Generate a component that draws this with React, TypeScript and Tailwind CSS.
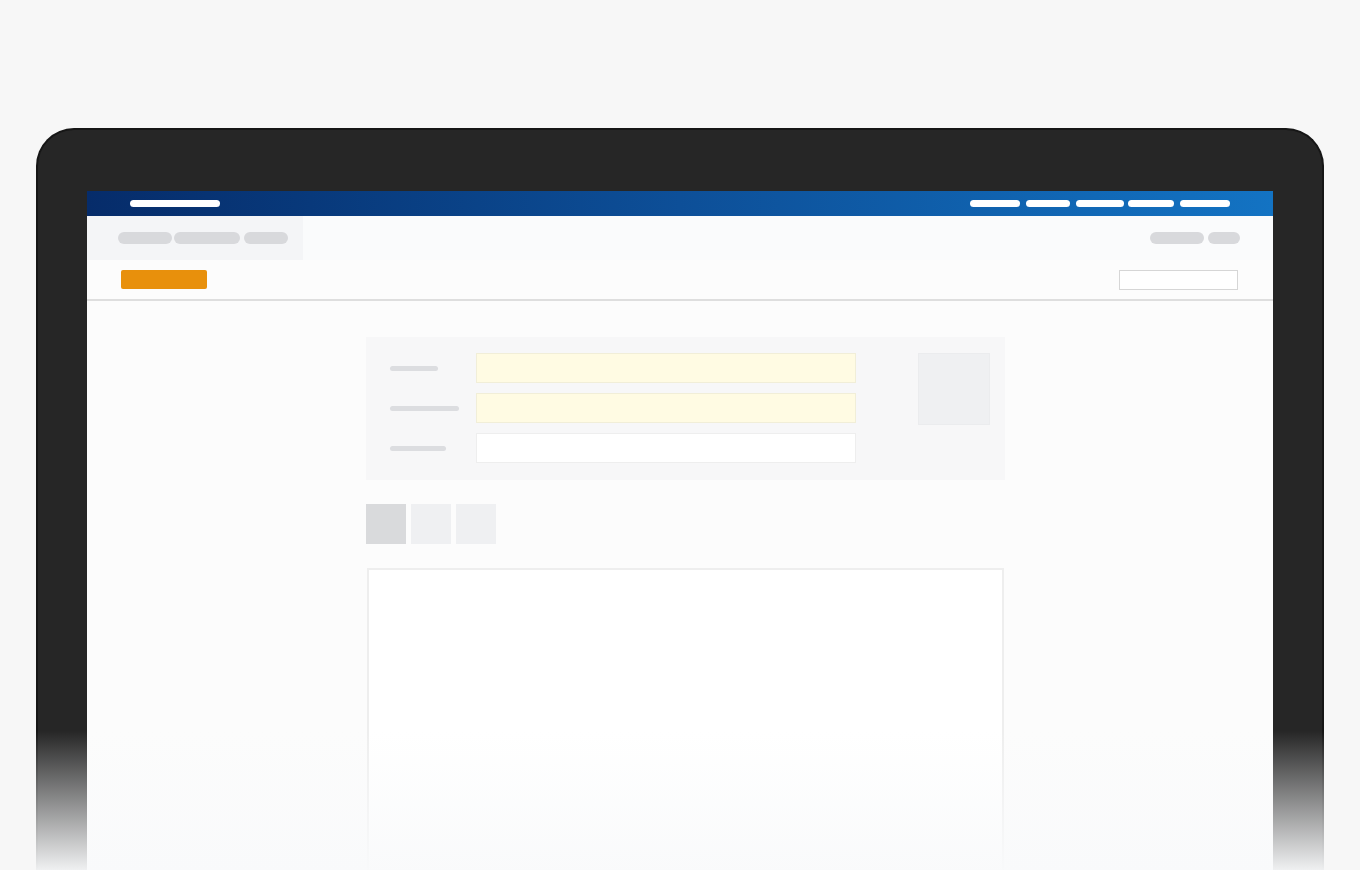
import React from "react";

export default function App() {
  return (
    <div className="relative h-[870px] w-[1360px] overflow-hidden bg-[#f7f7f7] px-[36px] pt-[128px] font-['Liberation_Sans',sans-serif]">
      <div className="relative h-full rounded-t-[38px] border-[2px] border-b-0 border-[#161616] bg-[#262626] px-[49px] pt-[61px]">
        <div className="flex h-full flex-col bg-[#fcfcfc]">
          {/* top bar */}
          <div className="flex h-[25px] items-center justify-between bg-linear-to-r from-[#062c6a] via-[#0d4f98] to-[#1373c3] pl-[43px] pr-[43px]">
            <div className="h-[7px] w-[90px] rounded-full bg-white" />
            <div className="flex items-center">
              <div className="h-[7px] w-[50px] rounded-full bg-white" />
              <div className="ml-[6px] h-[7px] w-[44px] rounded-full bg-white" />
              <div className="ml-[6px] h-[7px] w-[48px] rounded-full bg-white" />
              <div className="ml-[4px] h-[7px] w-[46px] rounded-full bg-white" />
              <div className="ml-[6px] h-[7px] w-[50px] rounded-full bg-white" />
            </div>
          </div>
          {/* subheader */}
          <div className="flex h-[44px] items-stretch justify-between bg-[#fafbfc]">
            <div className="flex w-[216px] items-center gap-[2px] bg-[#f4f5f7] pl-[31px]">
              <div className="h-[12px] w-[54px] rounded-full bg-[#d8d9dc]" />
              <div className="h-[12px] w-[66px] rounded-full bg-[#d8d9dc]" />
              <div className="ml-[2px] h-[12px] w-[44px] rounded-full bg-[#d8d9dc]" />
            </div>
            <div className="flex items-center gap-[4px] pr-[33px]">
              <div className="h-[12px] w-[54px] rounded-full bg-[#d8d9dc]" />
              <div className="h-[12px] w-[32px] rounded-full bg-[#d8d9dc]" />
            </div>
          </div>
          {/* action row */}
          <div className="flex h-[41px] items-center justify-between border-b-[2px] border-[#dedede] bg-[#fcfcfc] pl-[34px] pr-[35px]">
            <div className="h-[19px] w-[86px] rounded-[2px] bg-[#e8900c]" />
            <div className="h-[20px] w-[119px] border border-[#d6d6d6] bg-white" />
          </div>
          {/* main */}
          <div className="flex flex-1 flex-col pl-[279px] pt-[36px]">
            <div className="flex h-[143px] w-[639px] bg-[#f7f7f8] pl-[24px] pt-[16px]">
              <div className="flex flex-col gap-[10px]">
                {[
                  { w: "w-[48px]", y: true },
                  { w: "w-[69px]", y: true },
                  { w: "w-[56px]", y: false },
                ].map((r, i) => (
                  <div key={i} className="flex items-center">
                    <div className="w-[86px]">
                      <div className={`h-[5px] ${r.w} rounded-full bg-[#dcdde0]`} />
                    </div>
                    <div
                      className={
                        r.y
                          ? "h-[30px] w-[380px] border border-[#f1eed8] bg-[#fffbe3]"
                          : "h-[30px] w-[380px] border border-[#eeeeee] bg-white"
                      }
                    />
                  </div>
                ))}
              </div>
              <div className="ml-[62px] h-[72px] w-[72px] border border-[#ebecee] bg-[#eff0f2]" />
            </div>
            <div className="mt-[24px] flex gap-[5px]">
              <div className="h-[40px] w-[40px] bg-[#d9dadc]" />
              <div className="h-[40px] w-[40px] bg-[#eff0f2]" />
              <div className="h-[40px] w-[40px] bg-[#eff0f2]" />
            </div>
            <div className="mt-[24px] ml-[1px] w-[637px] flex-1 border-[2px] border-b-0 border-[#eeeeee] bg-white" />
          </div>
        </div>
        <div className="pointer-events-none absolute -bottom-px -left-[2px] -right-[2px] h-[140px] bg-linear-to-b from-[rgba(249,250,251,0)] to-[rgba(249,250,251,0.96)]" />
      </div>
    </div>
  );
}
